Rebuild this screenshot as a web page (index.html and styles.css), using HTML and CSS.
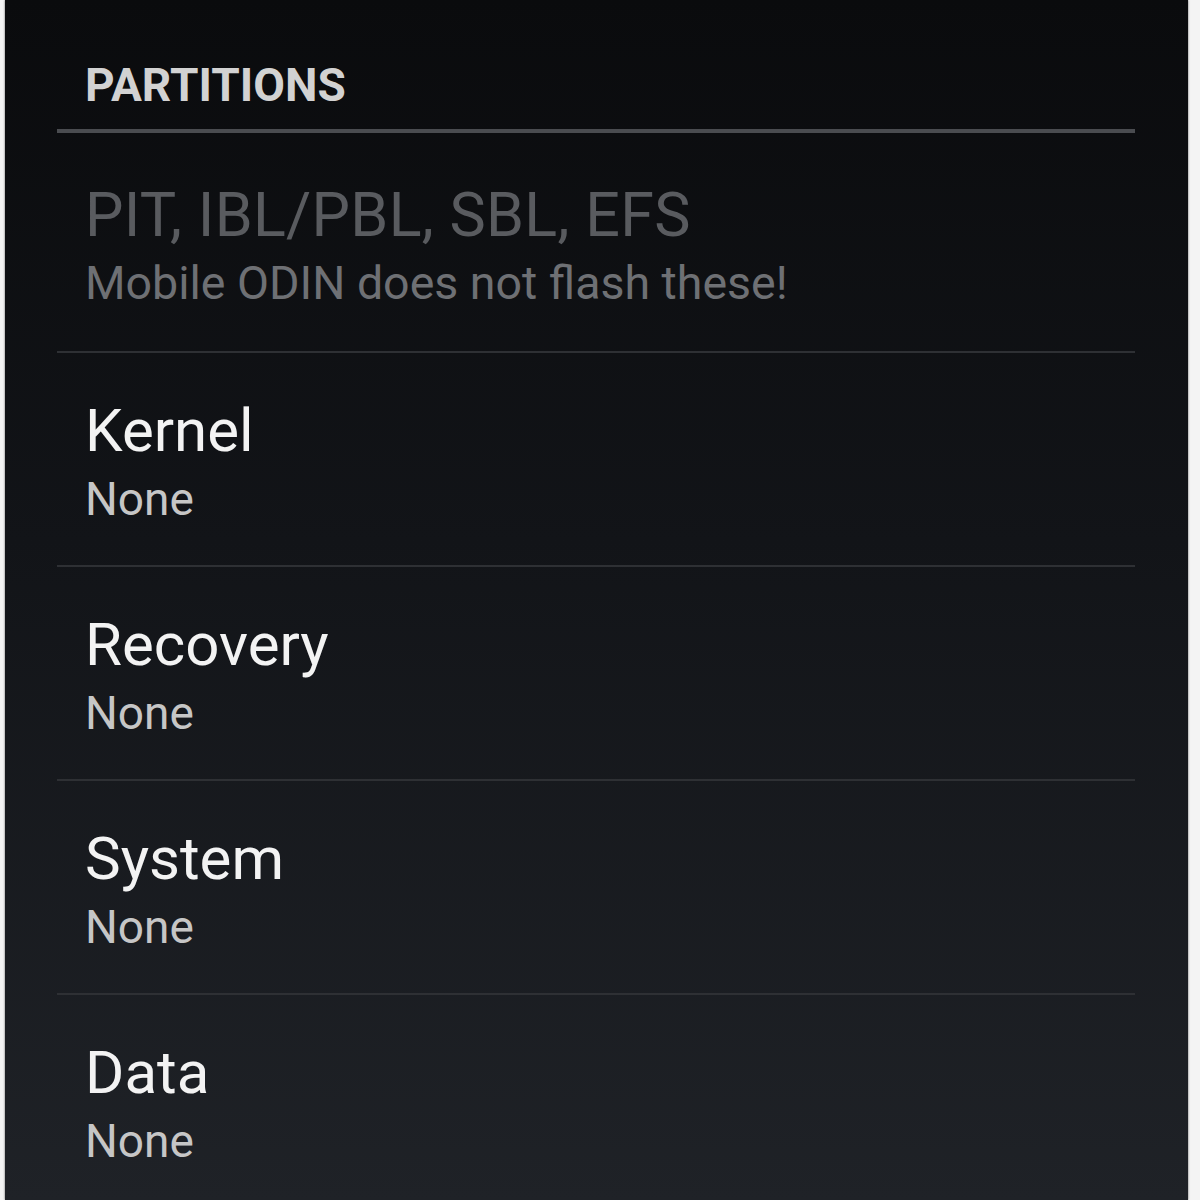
FILE: index.html
```html
<!DOCTYPE html>
<html lang="en">
<head>
  <meta charset="UTF-8">
  <title>Mobile ODIN - Partitions</title>
  <link rel="stylesheet" href="styles.css">
</head>
<body>

  <div class="screen">
    <!-- Section header -->
    <div class="section-header">PARTITIONS</div>

    <!-- Partition list -->
    <div class="pref pref-disabled">
      <div class="pref-title">PIT, IBL/PBL, SBL, EFS</div>
      <div class="pref-summary">Mobile ODIN does not flash these!</div>
    </div>

    <div class="pref">
      <div class="pref-title">Kernel</div>
      <div class="pref-summary">None</div>
    </div>

    <div class="pref">
      <div class="pref-title">Recovery</div>
      <div class="pref-summary">None</div>
    </div>

    <div class="pref">
      <div class="pref-title">System</div>
      <div class="pref-summary">None</div>
    </div>

    <div class="pref">
      <div class="pref-title">Data</div>
      <div class="pref-summary">None</div>
    </div>
  </div>

</body>
</html>
```

FILE: styles.css
```css
body {
  font-family: 'Roboto', 'Noto Sans', sans-serif;
  background-color: #f4f4f4;
  margin: 0;
  padding: 0;
  overflow: hidden;
}

.screen {
  margin: 0 12px 0 5px;
  height: 1200px;
  overflow: hidden;
  padding: 0 53px 0 52px;
  background: linear-gradient(to bottom, #0a0b0d 0%, #121418 45%, #1f2227 100%);
  box-shadow: 0 0 2px rgba(0, 0, 0, 0.6);
}

.section-header {
  padding: 57px 0 16px 28px;
  font-size: 46px;
  line-height: 56px;
  font-weight: 700;
  color: #d2d2d2;
  border-bottom: 4px solid #4a4c50;
}

.pref {
  padding: 42px 0 34px 28px;
  border-top: 2px solid #2e3034;
}

.pref-title {
  font-size: 60px;
  line-height: 72px;
  color: #f3f3f3;
}

.pref-summary {
  font-size: 46px;
  line-height: 64px;
  color: #c6c6c6;
}

/* Disabled row sits right under the header line */
.pref-disabled {
  border-top: none;
  padding: 46px 0 36px 28px;
}

.pref-disabled .pref-title {
  font-size: 61px;
  letter-spacing: 0.3px;
  color: #595b5f;
}

.pref-disabled .pref-summary {
  font-size: 46.5px;
  color: #6e7074;
}
```
